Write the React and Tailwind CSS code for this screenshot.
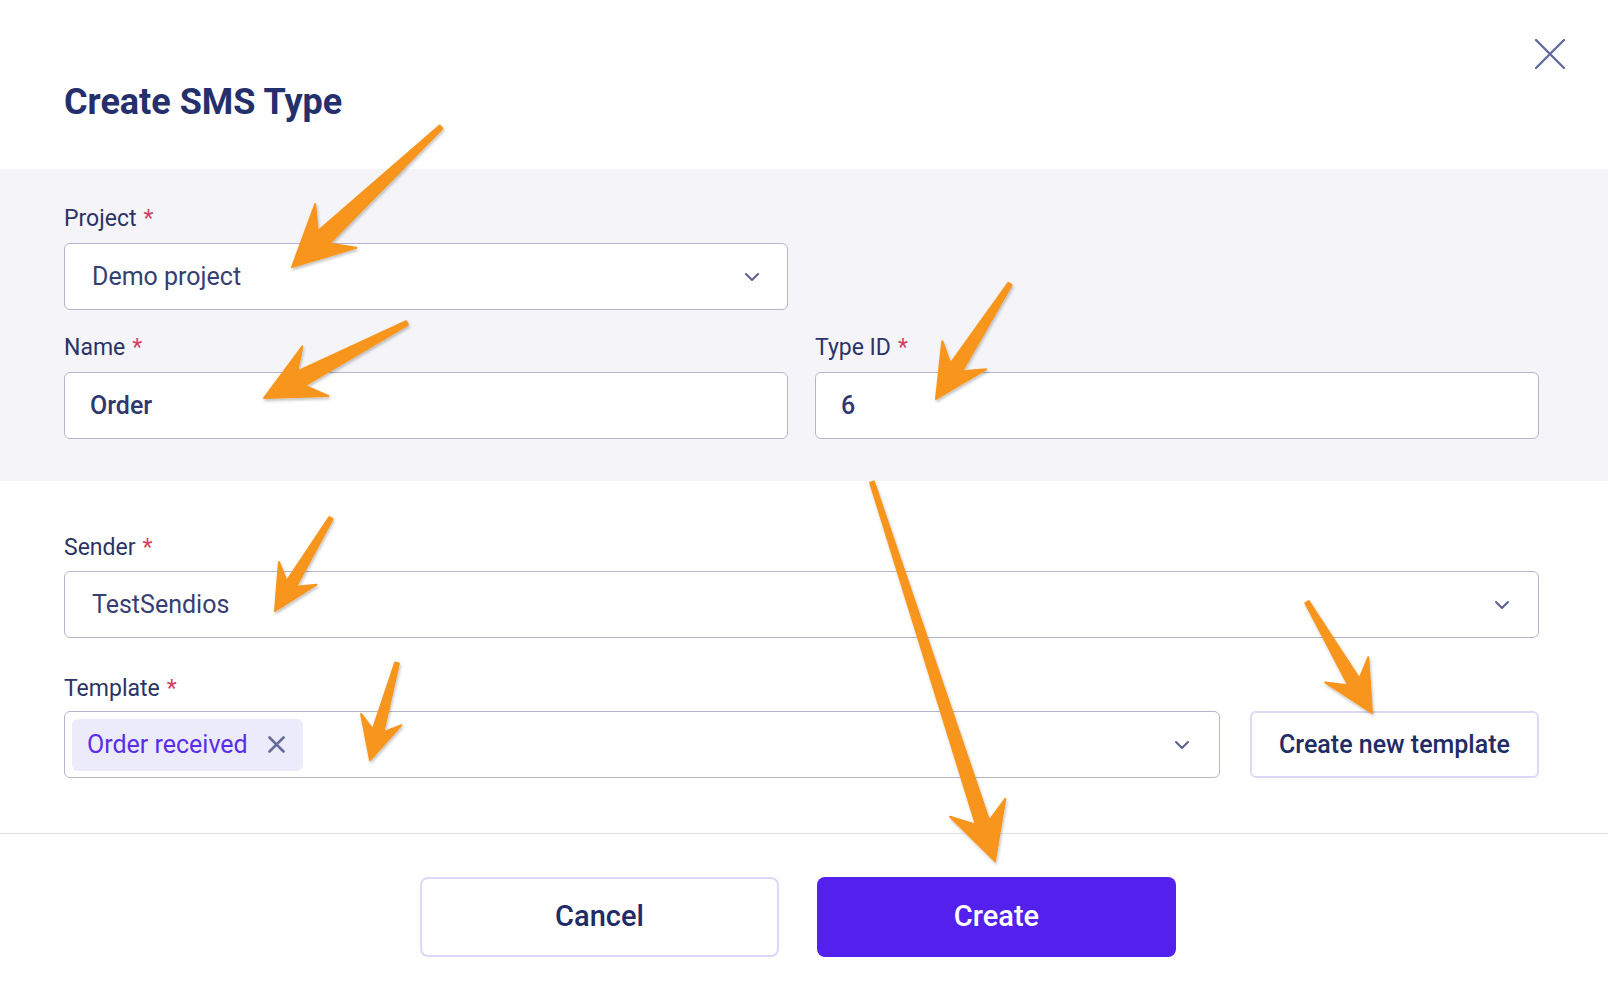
import React from "react";

const FONT = { fontFamily: "Roboto, 'Liberation Sans', sans-serif" };

function Chevron({ className = "" }) {
  return (
    <svg width="16" height="10" viewBox="0 0 16 10" className={className}>
      <path d="M2 2 L8 8 L14 2" fill="none" stroke="#5b608f" strokeWidth="2" strokeLinecap="round" strokeLinejoin="round" />
    </svg>
  );
}

function Label({ children }) {
  return (
    <div className="h-[26px] text-[23px] leading-[26px] text-[#2b3367]">
      {children}
      <span className="ml-[7px] text-[#d23f63]">*</span>
    </div>
  );
}

function SelectBox({ value, className = "" }) {
  return (
    <div className={`flex h-[67px] items-center justify-between rounded-[6px] border border-[#b3b5d1] bg-white pl-[27px] pr-[27px] ${className}`}>
      <span className="text-[25px] text-[#373e73]">{value}</span>
      <Chevron />
    </div>
  );
}

function TextBox({ value }) {
  return (
    <div className="flex h-[67px] items-center rounded-[6px] border border-[#b3b5d1] bg-white pl-[25px]">
      <span className="text-[25px] font-medium text-[#2f3670]">{value}</span>
    </div>
  );
}

// annotation arrows drawn over the form
function arrowPoints(x1, y1, x2, y2, hl, hw, sw) {
  const dx = x2 - x1;
  const dy = y2 - y1;
  const L = Math.sqrt(dx * dx + dy * dy);
  const ux = dx / L;
  const uy = dy / L;
  const nx = -uy;
  const ny = ux;
  const local = [
    [0, -2],
    [L - hl * 0.72, -sw / 2],
    [L - hl, -hw / 2],
    [L, 0],
    [L - hl, hw / 2],
    [L - hl * 0.72, sw / 2],
    [0, 2],
  ];
  return local
    .map(([a, b]) => `${(x1 + a * ux + b * nx).toFixed(1)},${(y1 + a * uy + b * ny).toFixed(1)}`)
    .join(" ");
}

const arrows = [
  [441, 127, 292, 267, 60, 60, 17],
  [407, 323, 264, 398, 58, 56, 16],
  [1010, 284, 936, 399, 52, 52, 14],
  [331, 518, 275, 611, 44, 44, 11],
  [397, 663, 370, 760, 42, 42, 11],
  [1307, 602, 1372, 713, 50, 50, 13],
  [872, 482, 995, 861, 56, 58, 14],
];

function Arrows() {
  return (
    <svg width="1608" height="998" viewBox="0 0 1608 998" className="pointer-events-none absolute left-0 top-0">
      <defs>
        <filter id="shadow" x="-20%" y="-20%" width="140%" height="140%">
          <feDropShadow dx="1" dy="2" stdDeviation="1.5" floodColor="#000" floodOpacity="0.25" />
        </filter>
      </defs>
      {arrows.map((a, i) => (
        <polygon key={i} points={arrowPoints(...a)} fill="#f8951d" strokeLinejoin="round" stroke="#f8951d" strokeWidth="2" filter="url(#shadow)" />
      ))}
    </svg>
  );
}

export default function App() {
  return (
    <div className="relative h-[998px] w-full overflow-hidden bg-white" style={FONT}>
      {/* Header */}
      <div className="h-[169px] pl-[64px] pt-[82px]">
        <h1 className="text-[36px] font-bold leading-[40px] text-[#242f6b]">Create SMS Type</h1>
      </div>
      <button className="absolute right-[43px] top-[39px] h-[30px] w-[30px]">
        <svg width="30" height="30" viewBox="0 0 30 30">
          <path d="M1 1 L29 29 M29 1 L1 29" stroke="#646a9c" strokeWidth="2.4" strokeLinecap="round" />
        </svg>
      </button>

      {/* Gray section */}
      <div className="bg-[#f5f5f9] pb-[42px] pl-[64px] pr-[69px] pt-[37px]">
        <div className="w-[724px]">
          <Label>Project</Label>
          <SelectBox value="Demo project" className="mt-[11px]" />
        </div>
        <div className="mt-[25px] grid grid-cols-2 gap-[27px]">
          <div>
            <Label>Name</Label>
            <div className="mt-[11px]">
              <TextBox value="Order" />
            </div>
          </div>
          <div>
            <Label>Type ID</Label>
            <div className="mt-[11px]">
              <TextBox value="6" />
            </div>
          </div>
        </div>
      </div>

      {/* White section */}
      <div className="pl-[64px] pr-[69px] pt-[54px]">
        <Label>Sender</Label>
        <SelectBox value="TestSendios" className="mt-[10px] pr-[28px]" />

        <div className="mt-[38px]">
          <Label>Template</Label>
        </div>
        <div className="mt-[9px] flex gap-[30px]">
          <div className="flex h-[67px] flex-1 items-center justify-between rounded-[6px] border border-[#b3b5d1] bg-white pl-[7px] pr-[29px]">
            <div className="flex h-[52px] items-center gap-[20px] rounded-[6px] bg-[#ecebfb] pl-[15px] pr-[18px]">
              <span className="text-[25px] text-[#5a2de6]">Order received</span>
              <svg width="17" height="17" viewBox="0 0 17 17">
                <path d="M1.5 1.5 L15.5 15.5 M15.5 1.5 L1.5 15.5" stroke="#676c98" strokeWidth="2.6" strokeLinecap="round" />
              </svg>
            </div>
            <Chevron />
          </div>
          <button className="h-[67px] w-[289px] rounded-[6px] border-2 border-[#dcd9f6] bg-white text-[25px] font-medium text-[#212b66]">
            Create new template
          </button>
        </div>
      </div>

      <div className="mt-[55px] border-t border-[#e2e0f4]" />

      {/* Footer buttons */}
      <div className="flex justify-center gap-[38px] pr-[12px] pt-[43px]">
        <button className="h-[80px] w-[359px] rounded-[8px] border-2 border-[#dcd9f6] bg-white text-[29px] font-medium text-[#212b66]">
          Cancel
        </button>
        <button className="h-[80px] w-[359px] rounded-[8px] bg-[#5420ee] text-[29px] font-medium text-white">
          Create
        </button>
      </div>

      <Arrows />
    </div>
  );
}
